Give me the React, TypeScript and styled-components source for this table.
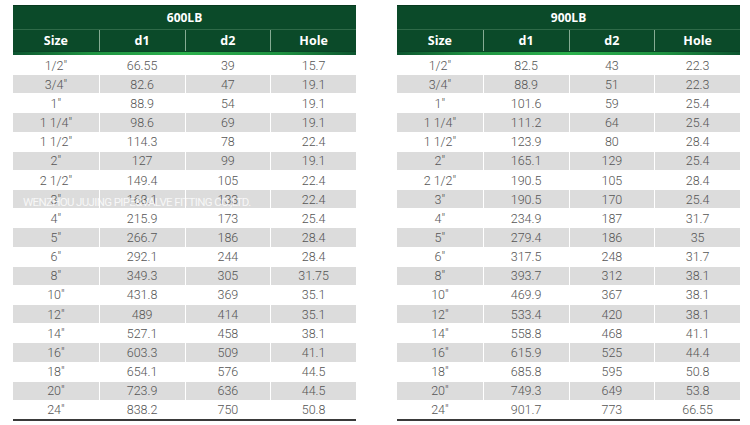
import React from "react";
import styled, { createGlobalStyle } from "styled-components";

const Global = createGlobalStyle`
  html, body { margin: 0; padding: 0; background: #ffffff; }
  body { font-family: "Roboto", "Liberation Sans", sans-serif; }
`;

const Page = styled.div`
  display: flex;
  gap: 41px;
  padding: 5px 0 0 13px;
`;

const TableWrap = styled.div`
  position: relative;
  width: 343px;
  display: flex;
  flex-direction: column;
`;

const TitleBar = styled.div`
  height: 25px;
  box-sizing: border-box;
  background: #0b4a29;
  border-top: 1px solid #073a1f;
  border-bottom: 1px solid #2f6a48;
  display: flex;
  align-items: center;
  justify-content: center;
  color: #ffffff;
  font-family: "Open Sans", sans-serif;
  font-weight: 700;
  font-size: 12px;
`;

const HeaderRow = styled.div`
  display: grid;
  grid-template-columns: repeat(4, 1fr);
  height: 21px;
  background: #0b4a29;
`;

const HeadCell = styled.div<{ $first?: boolean }>`
  display: flex;
  align-items: center;
  justify-content: center;
  color: #ffffff;
  font-family: "Open Sans", sans-serif;
  font-weight: 700;
  font-size: 12.5px;
  border-left: ${(p) => (p.$first ? "none" : "1px solid #86ab93")};
`;

const GlowLine = styled.div`
  height: 4px;
  background: linear-gradient(90deg, #0d5530 0%, #1f9242 22%, #2cb14d 50%, #1f9242 78%, #0d5530 100%);
  border-top: 1px solid #0a4426;
  box-sizing: border-box;
`;

const Body = styled.div`
  height: 364px;
  display: flex;
  flex-direction: column;
  border-bottom: 2px solid #3a3a3a;
`;

const Row = styled.div<{ $shade: boolean }>`
  flex: 1;
  display: grid;
  grid-template-columns: repeat(4, 1fr);
  border-top: 1px solid #ffffff;
  background: ${(p) => (p.$shade ? "#dcdcdc" : "#ffffff")};
`;

const Cell = styled.div<{ $first?: boolean }>`
  display: flex;
  align-items: center;
  justify-content: center;
  font-family: "Roboto", "Liberation Sans", sans-serif;
  font-weight: 300;
  font-size: 12.5px;
  color: #555555;
  border-left: ${(p) => (p.$first ? "none" : "1px solid #ffffff")};
`;

const Watermark = styled.div`
  position: absolute;
  left: 10px;
  top: 190px;
  font-family: "Roboto", sans-serif;
  font-size: 11.5px;
  letter-spacing: -0.65px;
  color: rgba(255, 255, 255, 0.8);
  white-space: nowrap;
  pointer-events: none;
`;

type R = [string, string, string, string];

const left: R[] = [
  ['1/2"', "66.55", "39", "15.7"],
  ['3/4"', "82.6", "47", "19.1"],
  ['1"', "88.9", "54", "19.1"],
  ['1 1/4"', "98.6", "69", "19.1"],
  ['1 1/2"', "114.3", "78", "22.4"],
  ['2"', "127", "99", "19.1"],
  ['2 1/2"', "149.4", "105", "22.4"],
  ['3"', "168.1", "133", "22.4"],
  ['4"', "215.9", "173", "25.4"],
  ['5"', "266.7", "186", "28.4"],
  ['6"', "292.1", "244", "28.4"],
  ['8"', "349.3", "305", "31.75"],
  ['10"', "431.8", "369", "35.1"],
  ['12"', "489", "414", "35.1"],
  ['14"', "527.1", "458", "38.1"],
  ['16"', "603.3", "509", "41.1"],
  ['18"', "654.1", "576", "44.5"],
  ['20"', "723.9", "636", "44.5"],
  ['24"', "838.2", "750", "50.8"],
];

const right: R[] = [
  ['1/2"', "82.5", "43", "22.3"],
  ['3/4"', "88.9", "51", "22.3"],
  ['1"', "101.6", "59", "25.4"],
  ['1 1/4"', "111.2", "64", "25.4"],
  ['1 1/2"', "123.9", "80", "28.4"],
  ['2"', "165.1", "129", "25.4"],
  ['2 1/2"', "190.5", "105", "28.4"],
  ['3"', "190.5", "170", "25.4"],
  ['4"', "234.9", "187", "31.7"],
  ['5"', "279.4", "186", "35"],
  ['6"', "317.5", "248", "31.7"],
  ['8"', "393.7", "312", "38.1"],
  ['10"', "469.9", "367", "38.1"],
  ['12"', "533.4", "420", "38.1"],
  ['14"', "558.8", "468", "41.1"],
  ['16"', "615.9", "525", "44.4"],
  ['18"', "685.8", "595", "50.8"],
  ['20"', "749.3", "649", "53.8"],
  ['24"', "901.7", "773", "66.55"],
];

const heads = ["Size", "d1", "d2", "Hole"];

function SpecTable({ title, rows, watermark }: { title: string; rows: R[]; watermark?: boolean }) {
  return (
    <TableWrap>
      <TitleBar>{title}</TitleBar>
      <HeaderRow>
        {heads.map((h, i) => (
          <HeadCell key={h} $first={i === 0}>
            {h}
          </HeadCell>
        ))}
      </HeaderRow>
      <GlowLine />
      <Body>
        {rows.map((r, i) => (
          <Row key={i} $shade={i % 2 === 1}>
            {r.map((c, j) => (
              <Cell key={j} $first={j === 0}>
                {c}
              </Cell>
            ))}
          </Row>
        ))}
      </Body>
      {watermark && <Watermark>WENZHOU JUJING PIPE&amp;VALVE FITTING CO.,LTD.</Watermark>}
    </TableWrap>
  );
}

export default function App() {
  return (
    <>
      <Global />
      <Page>
        <SpecTable title="600LB" rows={left} watermark />
        <SpecTable title="900LB" rows={right} />
      </Page>
    </>
  );
}
